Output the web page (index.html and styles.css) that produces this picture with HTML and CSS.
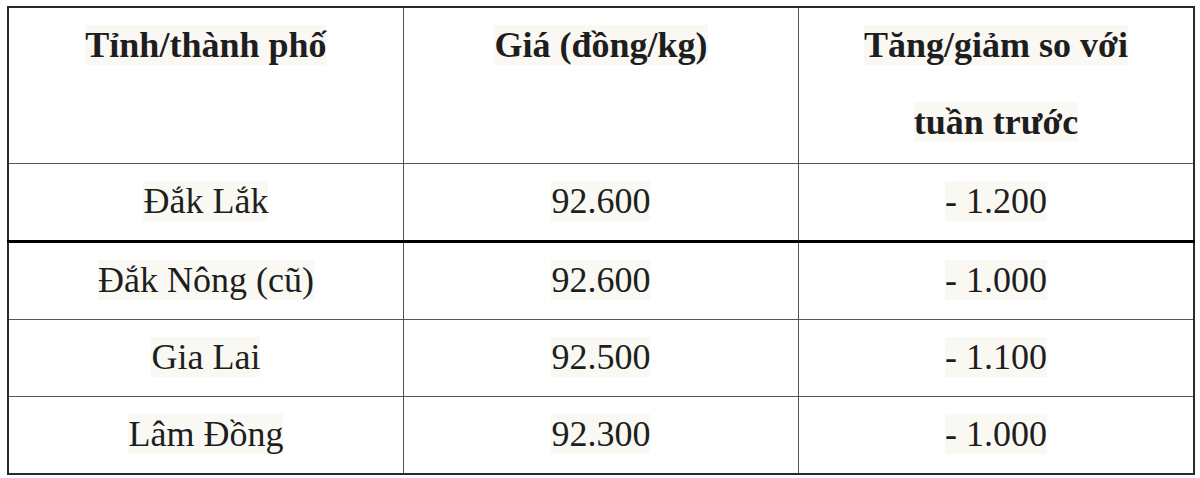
FILE: index.html
```html
<!DOCTYPE html>
<html lang="vi">
<head>
<meta charset="utf-8">
<link rel="stylesheet" href="styles.css">
</head>
<body>
<div class="page">
<table class="tbl">
  <thead>
    <tr class="head">
      <th><div class="cell"><span class="hl">Tỉnh/thành phố</span></div></th>
      <th><div class="cell"><span class="hl">Giá (đồng/kg)</span></div></th>
      <th><div class="cell"><span class="hl">Tăng/giảm so với</span><br><span class="hl">tuần trước</span></div></th>
    </tr>
  </thead>
  <tbody>
    <tr class="thick">
      <td><div class="cell"><span class="hl">Đắk Lắk</span></div></td>
      <td><div class="cell"><span class="hl">92.600</span></div></td>
      <td><div class="cell"><span class="hl">- 1.200</span></div></td>
    </tr>
    <tr>
      <td><div class="cell"><span class="hl">Đắk Nông (cũ)</span></div></td>
      <td><div class="cell"><span class="hl">92.600</span></div></td>
      <td><div class="cell"><span class="hl">- 1.000</span></div></td>
    </tr>
    <tr>
      <td><div class="cell"><span class="hl">Gia Lai</span></div></td>
      <td><div class="cell"><span class="hl">92.500</span></div></td>
      <td><div class="cell"><span class="hl">- 1.100</span></div></td>
    </tr>
    <tr>
      <td><div class="cell"><span class="hl">Lâm Đồng</span></div></td>
      <td><div class="cell"><span class="hl">92.300</span></div></td>
      <td><div class="cell"><span class="hl">- 1.000</span></div></td>
    </tr>
  </tbody>
</table>
</div>
</body>
</html>
```
FILE: styles.css
```css
html, body {
  margin: 0;
  padding: 0;
  background: #ffffff;
}
.page {
  padding: 6px 5px 0 7px;
}
.tbl {
  border-collapse: collapse;
  width: 1188px;
  table-layout: fixed;
  border: 2px solid #2a2a2a;
  font-family: "Liberation Serif", "Times New Roman", serif;
  font-size: 36px;
  color: #1e1e1e;
}
.tbl th, .tbl td {
  border: 1px solid #555;
  padding: 0;
  text-align: center;
  vertical-align: top;
  overflow: hidden;
  line-height: 77px;
}
.tbl th {
  font-weight: bold;
  height: 155px;
}
.tbl td {
  font-weight: normal;
  height: 76px;
}
.tbl tr.thick td {
  border-bottom: 3px solid #000;
}
.cell {
  margin-top: -1px;
}
.hl {
  background: #f9f8f3;
}
```
